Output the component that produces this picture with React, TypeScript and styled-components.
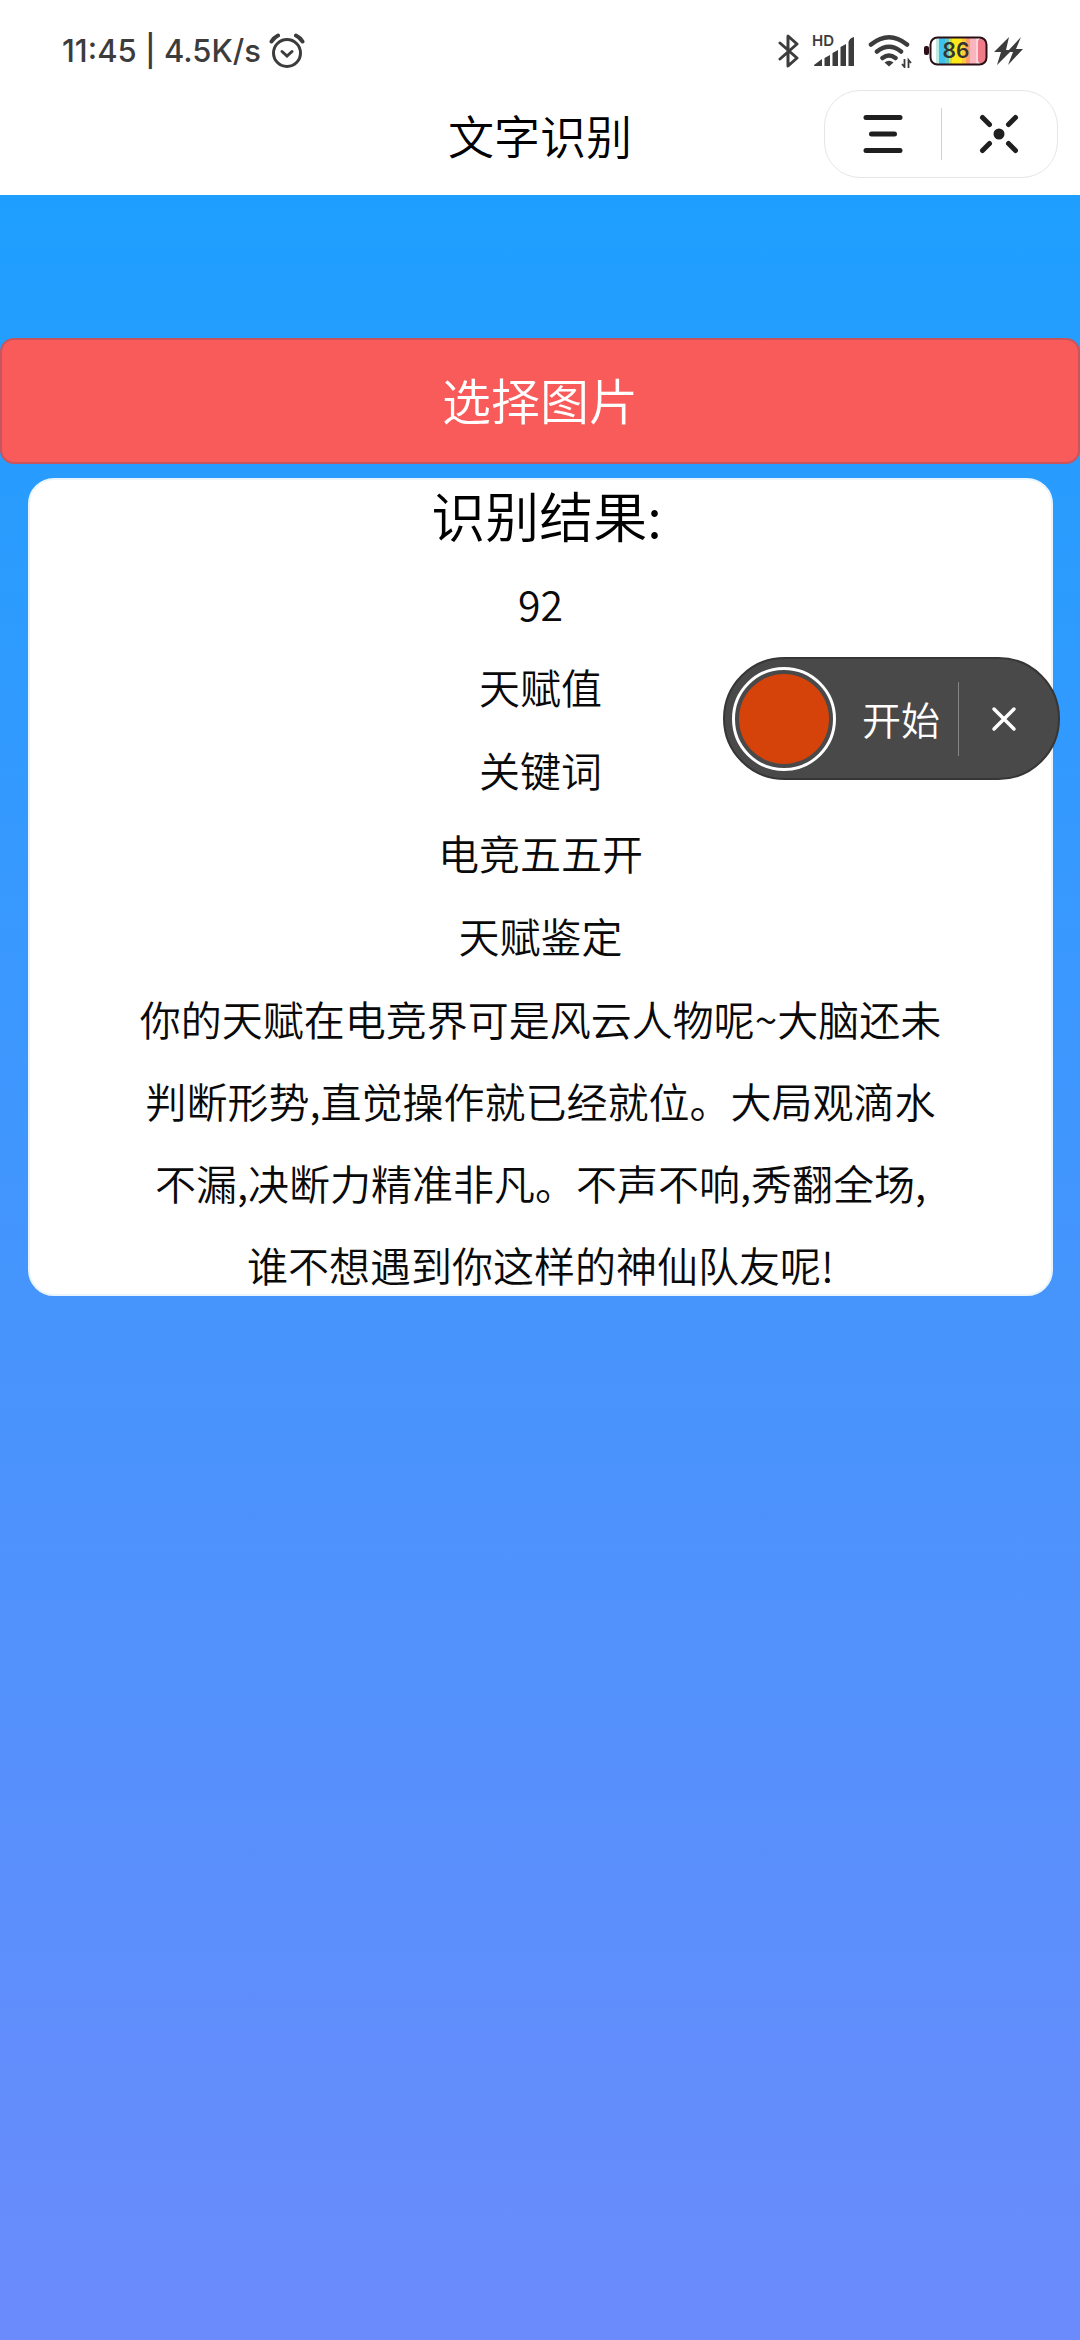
import React from "react";
import styled, { createGlobalStyle } from "styled-components";

const GlobalStyle = createGlobalStyle`
  *, *::before, *::after { box-sizing: border-box; }
  body {
    margin: 0;
    font-family: "Noto Sans CJK SC", "Noto Sans", sans-serif;
    font-weight: 350;
    color: #000;
    background: #fff;
  }
  button { font: inherit; color: inherit; margin: 0; padding: 0; border: 0; background: none; cursor: pointer; }
  svg { display: block; flex: none; }
`;

const Page = styled.div`
  position: relative;
  min-height: 100vh;
  display: flex;
  flex-direction: column;
`;

const StatusBar = styled.header`
  height: 90px;
  padding: 12px 56px 0 62px;
  display: flex;
  align-items: center;
  justify-content: space-between;
  color: #3c3c3c;
`;

const StatusGroup = styled.div<{ $gap: number }>`
  display: flex;
  align-items: center;
  gap: ${(p) => p.$gap}px;
`;

const StatusText = styled.span`
  font: 500 31px/40px Inter, "Noto Sans", sans-serif;
`;

const TitleBar = styled.div`
  height: 105px;
  padding: 0 22px 17px;
  display: grid;
  grid-template-columns: 1fr auto 1fr;
  align-items: center;
`;

const Title = styled.h1`
  grid-column: 2;
  margin: 0;
  font-size: 46px;
  line-height: 64px;
  font-weight: 350;
`;

const Capsule = styled.div`
  justify-self: end;
  display: flex;
  align-items: center;
  width: 234px;
  height: 88px;
  border: 1px solid #e6e6e6;
  border-radius: 36px;
`;

const CapsuleButton = styled.button`
  flex: 1;
  height: 100%;
  display: grid;
  place-items: center;
`;

const Divider = styled.span<{ $height: number; $color: string }>`
  width: 1px;
  height: ${(p) => p.$height}px;
  background: ${(p) => p.$color};
`;

const Main = styled.main`
  flex: 1;
  padding-top: 143px;
  background: linear-gradient(#1e9fff, #6b8bfb);
`;

const PickButton = styled.button`
  && {
    display: block;
    width: 100%;
    height: 126px;
    padding-bottom: 4px;
    border: 2px solid #c9555c;
    border-radius: 14px;
    background: #f95a5a;
    color: #fff;
    font-size: 49px;
    line-height: 72px;
  }
`;

const ResultCard = styled.section`
  margin: 14px 27px 0 28px;
  padding-bottom: 1px;
  border: 2px solid #eaf4fd;
  border-radius: 26px;
  background: #fff;
  text-align: center;
`;

const ResultTitle = styled.h2`
  margin: 0;
  font-size: 54px;
  line-height: 70px;
  font-weight: 350;
  padding-left: 12px;
`;

const Results = styled.div`
  margin-bottom: -12px;
  padding-top: 12px;
  display: grid;
  gap: 1px;
`;

const ResultLine = styled.p`
  margin: 0;
  font-size: 41px;
  line-height: 82px;
  color: #0a0a0a;
  white-space: nowrap;
`;

const Recorder = styled.div`
  position: absolute;
  top: 657px;
  right: 20px;
  width: 337px;
  height: 123px;
  padding-left: 7px;
  border: 2px solid #363636;
  border-radius: 62px;
  background: #494949;
  color: #fff;
  display: flex;
  align-items: center;
`;

const StartButton = styled.button`
  display: flex;
  align-items: center;
  gap: 26px;
  padding-right: 18px;
`;

const StartLabel = styled.span`
  font-size: 39px;
  line-height: 56px;
  padding-bottom: 2px;
`;

const Ring = styled.span`
  display: block;
  width: 104px;
  height: 104px;
  padding: 4px;
  border: 3px solid #fff;
  border-radius: 50%;
`;

const RecordFill = styled.span`
  display: block;
  height: 100%;
  border-radius: 50%;
  background: #d5430b;
`;

const CloseButton = styled.button`
  flex: 1;
  height: 100%;
  display: flex;
  align-items: center;
  padding-left: 32px;
`;

const AlarmIcon = () => (
  <svg width="36" height="36" viewBox="0 0 36 36" fill="none" stroke="currentColor" strokeWidth="3" strokeLinecap="round">
    <circle cx="18" cy="20" r="13.5" />
    <path d="M13 18.5l5 4.500 5-4.500" />
    <path d="M2.500 8.500Q5 4.500 9 2.500M33.500 8.500Q31 4.500 27 2.500" strokeWidth="4" />
  </svg>
);

const BluetoothIcon = () => (
  <svg width="22" height="34" viewBox="0 0 22 34" fill="none" stroke="currentColor" strokeWidth="3" strokeLinejoin="round" strokeLinecap="round">
    <path d="M2 9l17 15-9 8V2l9 8L2 25" />
  </svg>
);

const SignalIcon = () => (
  <svg width="44" height="44" viewBox="0 -5 44 44" fill="currentColor">
    <path d="M2 31l8-6v7H3q-1.500 0-1-1zM12.500 24l5.500-3v11h-5.500zM20.500 19l5.500-3v16h-5.500zM28.500 13l5.500-3v22h-5.500zM36.500 8q1-4 5.500-5v29h-5.500z" />
    <text x="0" y="12" fontFamily="Inter, sans-serif" fontWeight="600" fontSize="15">HD</text>
  </svg>
);

const WifiIcon = () => (
  <svg width="44" height="34" viewBox="0 0 44 34" fill="none" stroke="currentColor" strokeWidth="4.5" strokeLinecap="round">
    <path d="M3 10.500Q21-4 39 10.500M9 17.500Q21 8 33 17.500M14.500 24Q21 19 27.500 24" />
    <path d="M16.500 28.500Q21 25 25.500 28.500L21 32.500z" fill="currentColor" stroke="none" />
    <path d="M36.500 25v8l-2.500-3M40.500 34v-8l2.500 3" strokeWidth="1.800" strokeLinecap="butt" />
  </svg>
);

const stripes = [
  ["#bdece4", 12, 3], ["#3fc1ee", 15, 6], ["#63c9c4", 21, 4], ["#c8dd4a", 25, 3],
  ["#ffe81c", 28, 10], ["#ffc93c", 38, 4], ["#ff9d6b", 42, 4], ["#f9b5bd", 46, 6], ["#fbd3d8", 52, 2], ["#ef7b88", 54, 8],
] as const;

const BatteryIcon = () => (
  <svg width="64" height="30" viewBox="0 0 64 30">
    <rect x="0" y="10" width="5" height="9" rx="2" fill="#2a1016" />
    <rect x="6.500" y="1.500" width="56" height="27" rx="7" fill="#fff" />
    {stripes.map(([fill, x, w]) => (
      <rect key={x} x={x} y="2" width={w} height="26" rx={x > 53 ? 4 : 0} fill={fill} />
    ))}
    <rect x="6.500" y="1.500" width="56" height="27" rx="7" fill="none" stroke="#2a1016" strokeWidth="2" />
    <text x="32" y="22" textAnchor="middle" fontFamily="Inter, sans-serif" fontWeight="600" fontSize="21" fill="#333">86</text>
  </svg>
);

const ChargingIcon = () => (
  <svg width="30" height="30" viewBox="0 0 30 30" fill="currentColor">
    <path d="M15 1L0 16h7L3 29l15-15h-6zM27 1L13 16h6l-5 13 15-16h-7z" />
  </svg>
);

const MenuIcon = () => (
  <svg width="40" height="40" viewBox="0 0 40 40" stroke="#1f1f1f" strokeWidth="5" strokeLinecap="round">
    <path d="M3 3.500h34M8.500 20h23M3 36.500h34" />
  </svg>
);

const ExitIcon = () => (
  <svg width="40" height="40" viewBox="0 0 40 40" stroke="#1f1f1f" strokeWidth="5" strokeLinecap="round">
    <path d="M3.500 3.500l7 7M36.500 3.500l-7 7M3.500 36.500l7-7M36.500 36.500l-7-7" />
    <circle cx="20" cy="20" r="5.500" fill="#1f1f1f" stroke="none" />
  </svg>
);

const CloseIcon = () => (
  <svg width="26" height="26" viewBox="0 0 26 26" stroke="#fff" strokeWidth="3.500" strokeLinecap="round">
    <path d="M3 3l20 20M23 3L3 23" />
  </svg>
);

const shortResults = ["92", "天赋值", "关键词", "电竞五五开", "天赋鉴定"];
const verdict = [
  "你的天赋在电竞界可是风云人物呢~大脑还未",
  "判断形势,直觉操作就已经就位。大局观滴水",
  "不漏,决断力精准非凡。不声不响,秀翻全场,",
  "谁不想遇到你这样的神仙队友呢!",
];

export default function App() {
  return (
    <>
      <GlobalStyle />
      <Page>
        <StatusBar>
          <StatusGroup $gap={8}>
            <StatusText>11:45 | 4.5K/s</StatusText>
            <AlarmIcon />
          </StatusGroup>
          <StatusGroup $gap={12}>
            <BluetoothIcon />
            <SignalIcon />
            <WifiIcon />
            <StatusGroup $gap={6}>
              <BatteryIcon />
              <ChargingIcon />
            </StatusGroup>
          </StatusGroup>
        </StatusBar>
        <TitleBar>
          <Title>文字识别</Title>
          <Capsule>
            <CapsuleButton aria-label="菜单"><MenuIcon /></CapsuleButton>
            <Divider $height={52} $color="#d2d2d2" />
            <CapsuleButton aria-label="退出"><ExitIcon /></CapsuleButton>
          </Capsule>
        </TitleBar>
        <Main>
          <PickButton>选择图片</PickButton>
          <ResultCard>
            <ResultTitle>识别结果:</ResultTitle>
            <Results>
              {shortResults.map((line) => (
                <ResultLine key={line}>{line}</ResultLine>
              ))}
              <ResultLine>
                {verdict.map((line, i) => (
                  <React.Fragment key={line}>
                    {i > 0 && <br />}
                    {line}
                  </React.Fragment>
                ))}
              </ResultLine>
            </Results>
          </ResultCard>
        </Main>
        <Recorder>
          <StartButton>
            <Ring><RecordFill /></Ring>
            <StartLabel>开始</StartLabel>
          </StartButton>
          <Divider $height={74} $color="#858585" />
          <CloseButton aria-label="关闭"><CloseIcon /></CloseButton>
        </Recorder>
      </Page>
    </>
  );
}
